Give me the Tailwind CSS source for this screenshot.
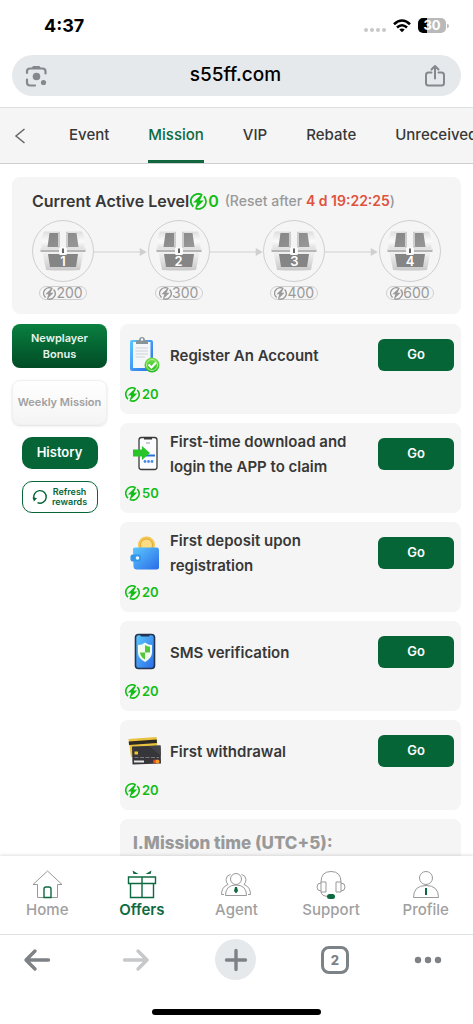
<!DOCTYPE html>
<html lang="en">
<head>
    <meta charset="UTF-8">
    <meta name="viewport" content="width=device-width, initial-scale=1.0">
    <title>Mission</title>
    <script src="https://cdn.jsdelivr.net/npm/@tailwindcss/browser@4"></script>
</head>
<body class="flex h-screen flex-col overflow-hidden bg-white font-['Inter','Liberation_Sans',sans-serif] text-[#383838]">

    <!-- shared icons -->
    <svg class="absolute size-0">
        <symbol id="coin" viewBox="0 0 16 16">
            <path d="M11 1.700A6.900 6.900 0 0 0 3.200 13M5.400 14.400A6.900 6.900 0 0 0 13 3.200" fill="none" stroke="currentColor" stroke-width="1.700"/>
            <path d="M11.200 1L3 9H6.600L4.600 15.400L13 7H9.200L12 1.400Z" fill="currentColor"/>
        </symbol>
        <symbol id="chest" viewBox="0 0 46 42">
            <path d="M4 1.500H42L44.500 8V21H1.500V8Z" fill="url(#metal)"/>
            <path d="M9.500 3H36.500L38.500 17H7.500Z" fill="url(#dark)"/>
            <path d="M2.500 22H43.500L40 40Q23 41 6 40Z" fill="url(#metal2)"/>
            <path d="M8 24H38L36 37H10Z" fill="#858585"/>
            <path d="M0.500 19.500H45.500V22H0.500Z" fill="#b5b5b5"/>
            <path d="M0.500 18.500H45.500V20H0.500Z" fill="#e4e4e4"/>
            <path d="M18 2H28V18H18Z" fill="#cdcdcd"/>
            <path d="M20 0H26V20H20Z" fill="#f4f4f4"/>
            <rect x="19" y="17" width="8" height="8" rx="1.500" fill="#fafafa"/>
            <path d="M22 18.500H24V23H22Z" fill="#666"/>
        </symbol>
        <defs>
            <linearGradient id="metal" x1="0" y1="0" x2="0" y2="1"><stop offset="0" stop-color="#dedede"/><stop offset=".5" stop-color="#fafafa"/><stop offset="1" stop-color="#d6d6d6"/></linearGradient>
            <linearGradient id="metal2" x1="0" y1="0" x2="0" y2="1"><stop offset="0" stop-color="#f2f2f2"/><stop offset="1" stop-color="#c9c9c9"/></linearGradient>
            <linearGradient id="dark" x1="0" y1="0" x2="1" y2="1"><stop offset="0" stop-color="#858585"/><stop offset="1" stop-color="#989898"/></linearGradient>
            <linearGradient id="blue" x1="0" y1="0" x2="1" y2="1"><stop offset="0" stop-color="#5cc8fd"/><stop offset="1" stop-color="#2a6be8"/></linearGradient>
            <linearGradient id="green" x1="0" y1="0" x2="0" y2="1"><stop offset="0" stop-color="#7be04e"/><stop offset="1" stop-color="#23b528"/></linearGradient>
        </defs>
    </svg>

    <!-- status bar -->
    <div class="flex h-[55px] shrink-0 items-center justify-between pr-6 pb-1 pl-11 text-black">
        <span class="text-lg leading-6 font-bold">4:37</span>
        <div class="flex items-center gap-[7px]">
            <svg class="mt-2 h-1 w-[22px]" viewBox="0 0 22 4" fill="#c8c8c8"><circle cx="2" cy="2" r="2"/><circle cx="8" cy="2" r="2"/><circle cx="14" cy="2" r="2"/><circle cx="20" cy="2" r="2"/></svg>
            <svg class="h-[14px] w-[18px]" viewBox="0 0 18 14" fill="none" stroke="#000" stroke-width="2.600">
                <path d="M1 5.200Q9 -2.200 17 5.200M4 8.500Q9 4 14 8.500"/>
                <path d="M6.300 10.600Q9 8.500 11.700 10.600L9 13.300Z" fill="#000" stroke="none"/>
            </svg>
            <div class="flex items-center gap-px">
                <span class="w-7 rounded-[5px] bg-linear-to-r from-black from-32% to-[#b9b9b9] to-32% text-center text-[13px] leading-[15px] font-bold text-white">30</span>
                <span class="h-1 w-[2px] rounded-r bg-[#b9b9b9]"></span>
            </div>
        </div>
    </div>

    <!-- address bar -->
    <div class="mx-3 flex h-[41px] shrink-0 items-center justify-between rounded-full bg-[#e6e9ec] px-3 text-[#85888c]">
        <button type="button" aria-label="Search with camera">
            <svg class="size-6" viewBox="0 0 24 24" fill="none" stroke="currentColor" stroke-width="2.200" stroke-linecap="round">
                <path d="M3 9V7.500Q3 4.500 6 4.500H18.500Q21.500 4.500 21.500 7.500V9.500M3 15.500V18.500Q3 21.500 6 21.500H11"/>
                <path d="M7.500 4.500L9 2H15.500L17 4.500Z" fill="currentColor" stroke="none"/>
                <circle cx="12.500" cy="12.500" r="3.800" fill="currentColor" stroke="none"/>
                <circle cx="19.500" cy="18.500" r="2.600" fill="currentColor" stroke="none"/>
            </svg>
        </button>
        <span class="text-[19px] font-medium text-black">s55ff.com</span>
        <button type="button" aria-label="Share" class="pr-[2px]">
            <svg class="size-6" viewBox="0 0 24 24" fill="none" stroke="currentColor" stroke-width="2" stroke-linecap="round" stroke-linejoin="round">
                <path d="M8.500 8.500H5.500Q3 8.500 3 11V19Q3 21.500 5.500 21.500H18.500Q21 21.500 21 19V11Q21 8.500 18.500 8.500H15.500M12 14.500V2.500M8.500 5.500L12 2L15.500 5.500"/>
            </svg>
        </button>
    </div>

    <!-- tabs -->
    <nav class="mt-[11px] flex h-[57px] shrink-0 items-stretch overflow-hidden border-t border-b border-t-[#dcdfe2] border-b-[#cfcfcf] bg-[#f5f5f5] text-[15px] font-medium">
        <button type="button" aria-label="Back" class="w-[69px] shrink-0 pl-[14px]">
            <svg class="h-4 w-3" viewBox="0 0 12 16" fill="none" stroke="#666" stroke-width="1.500"><path d="M10.500 1L2 8L10.500 15"/></svg>
        </button>
        <div class="flex shrink-0 gap-[39px]">
            <a href="#" class="flex items-center">Event</a>
            <a href="#" class="flex items-center border-y-[3px] border-t-transparent border-b-[#11653f] text-[#0c6a40]">Mission</a>
            <a href="#" class="flex items-center">VIP</a>
            <a href="#" class="flex items-center">Rebate</a>
            <a href="#" class="flex items-center">Unreceived</a>
        </div>
    </nav>

    <main class="flex-1 overflow-hidden px-3 pt-[13px]">
        <!-- active level -->
        <section class="rounded-lg bg-[#f5f5f5] px-5 pt-3 pb-[14px]">
            <div class="flex items-center whitespace-nowrap">
                <h2 class="text-base font-semibold">Current Active Level</h2>
                <svg class="ml-px size-[17px] text-[#12bd15]"><use href="#coin"/></svg>
                <span class="ml-px text-base font-semibold text-[#12bd15]">0</span>
                <span class="ml-[6px] text-sm font-medium text-[#999]">(Reset after <b class="font-semibold text-[#e0523c]">4 d 19:22:25</b>)</span>
            </div>
            <div class="mt-[7px] flex items-start">
                <div class="relative flex w-[62px] shrink-0 flex-col items-center">
                    <div class="flex size-[62px] items-center justify-center rounded-full border border-[#cfcfcf]"><svg class="h-[42px] w-[46px]"><use href="#chest"/></svg></div>
                    <span class="absolute top-8 text-[13px] leading-[18px] font-semibold text-white">1</span>
                    <div class="mt-1 flex h-[14px] w-12 items-center justify-center rounded-full border border-[#cfcfcf] text-sm text-[#999]"><svg class="size-[13px]"><use href="#coin"/></svg>200</div>
                </div>
                <svg class="mt-7 h-2 min-w-0 flex-1" viewBox="0 0 54 8"><path d="M0 4H48" stroke="#cfcfcf"/><path d="M46 0L53 4L46 8Z" fill="#cfcfcf"/></svg>
                <div class="relative flex w-[62px] shrink-0 flex-col items-center">
                    <div class="flex size-[62px] items-center justify-center rounded-full border border-[#cfcfcf]"><svg class="h-[42px] w-[46px]"><use href="#chest"/></svg></div>
                    <span class="absolute top-8 text-[13px] leading-[18px] font-semibold text-white">2</span>
                    <div class="mt-1 flex h-[14px] w-12 items-center justify-center rounded-full border border-[#cfcfcf] text-sm text-[#999]"><svg class="size-[13px]"><use href="#coin"/></svg>300</div>
                </div>
                <svg class="mt-7 h-2 min-w-0 flex-1" viewBox="0 0 54 8"><path d="M0 4H48" stroke="#cfcfcf"/><path d="M46 0L53 4L46 8Z" fill="#cfcfcf"/></svg>
                <div class="relative flex w-[62px] shrink-0 flex-col items-center">
                    <div class="flex size-[62px] items-center justify-center rounded-full border border-[#cfcfcf]"><svg class="h-[42px] w-[46px]"><use href="#chest"/></svg></div>
                    <span class="absolute top-8 text-[13px] leading-[18px] font-semibold text-white">3</span>
                    <div class="mt-1 flex h-[14px] w-12 items-center justify-center rounded-full border border-[#cfcfcf] text-sm text-[#999]"><svg class="size-[13px]"><use href="#coin"/></svg>400</div>
                </div>
                <svg class="mt-7 h-2 min-w-0 flex-1" viewBox="0 0 54 8"><path d="M0 4H48" stroke="#cfcfcf"/><path d="M46 0L53 4L46 8Z" fill="#cfcfcf"/></svg>
                <div class="relative flex w-[62px] shrink-0 flex-col items-center">
                    <div class="flex size-[62px] items-center justify-center rounded-full border border-[#cfcfcf]"><svg class="h-[42px] w-[46px]"><use href="#chest"/></svg></div>
                    <span class="absolute top-8 text-[13px] leading-[18px] font-semibold text-white">4</span>
                    <div class="mt-1 flex h-[14px] w-12 items-center justify-center rounded-full border border-[#cfcfcf] text-sm text-[#999]"><svg class="size-[13px]"><use href="#coin"/></svg>600</div>
                </div>
            </div>
        </section>

        <div class="mt-[10px] flex gap-[13px]">
            <!-- mission groups -->
            <aside class="flex w-[95px] shrink-0 flex-col items-center gap-3 font-semibold">
                <button type="button" class="h-11 w-full rounded-lg bg-linear-to-b from-[#0a8040] to-[#024c26] px-4 text-[11px] leading-4 text-[#e6f3eb]">Newplayer Bonus</button>
                <button type="button" class="h-[45px] w-full rounded-lg border border-[#f0f0f0] bg-linear-to-b from-white to-[#f4f4f4] text-[11px] whitespace-nowrap text-[#a0a0a0] shadow">Weekly Mission</button>
                <button type="button" class="h-8 w-[76px] rounded-[10px] bg-[#056536] text-[13px] text-white">History</button>
                <button type="button" class="flex h-8 w-[76px] items-center justify-center gap-1 rounded-[10px] border border-[#056536] text-[9px] leading-[10px] text-[#056536]">
                    <svg class="size-4" viewBox="0 0 16 16" fill="none" stroke="currentColor" stroke-width="1.400"><path d="M2 10A6.300 6.300 0 1 1 5.500 13.700"/><path d="M0.500 8.500L5 9L2 12.500Z" fill="currentColor" stroke="none"/></svg>
                    <span>Refresh<br>rewards</span>
                </button>
            </aside>

            <!-- missions -->
            <div class="flex min-w-0 flex-1 flex-col gap-[9px]">
                <article class="h-[90px] rounded-lg bg-[#f5f5f5] pt-[6px] pr-[7px] pl-[5px]">
                    <div class="flex h-[50px] items-center">
                        <svg class="size-10 shrink-0" viewBox="0 0 40 40">
                            <rect x="5" y="5" width="23" height="31" rx="2" fill="url(#blue)"/>
                            <path d="M8 7H25.500V31L23 33H8Z" fill="#f4f6f8"/>
                            <path d="M10.500 13H23M10.500 16H23M10.500 19H23M10.500 22H20" stroke="#d0d3d8"/>
                            <path d="M11 5.500H14Q14 2 17 2T20 5.500H23V9H11Z" fill="#87949a"/><circle cx="17" cy="4.500" r="1.200" fill="#fff"/>
                            <circle cx="27" cy="30" r="7.500" fill="url(#green)"/><circle cx="27" cy="30" r="5.500" fill="none" stroke="#b3f08e"/>
                            <path d="M23.500 29.500L26.500 32.500L31 27.500" fill="none" stroke="#fff" stroke-width="2"/>
                        </svg>
                        <h3 class="ml-[5px] flex-1 text-[15px] leading-[25px] font-semibold">Register An Account</h3>
                        <button type="button" class="h-8 w-[76px] shrink-0 rounded-md bg-[#056536] text-[13px] font-semibold text-white">Go</button>
                    </div>
                    <p class="mt-[5px] flex items-center gap-[2px] text-[13px] font-semibold text-[#12bd15]"><svg class="size-[15px]"><use href="#coin"/></svg>20</p>
                </article>

                <article class="h-[90px] rounded-lg bg-[#f5f5f5] pt-[6px] pr-[7px] pl-[5px]">
                    <div class="flex h-[50px] items-center">
                        <svg class="size-10 shrink-0" viewBox="0 0 40 40">
                            <rect x="14" y="3.500" width="18" height="32" rx="2.500" fill="#fafcff" stroke="#3b3b3b" stroke-width="1.300"/>
                            <path d="M19 3.500H27V5.500H19Z" fill="#3b3b3b"/><path d="M21 9H25" stroke="#999"/>
                            <path d="M21 21.500H30" stroke="#2c70d8" stroke-width="2"/>
                            <circle cx="20" cy="27.500" r="1.400" fill="#4689e8"/><circle cx="23.500" cy="27.500" r="1.400" fill="#4689e8"/><circle cx="27" cy="27.500" r="1.400" fill="#4689e8"/>
                            <path d="M8 15.500H17V12L25 19L17 26V22.500H8Z" fill="#27c42a"/>
                        </svg>
                        <h3 class="ml-[5px] flex-1 text-[15px] leading-[25px] font-semibold">First-time download and login the APP to claim</h3>
                        <button type="button" class="h-8 w-[76px] shrink-0 rounded-md bg-[#056536] text-[13px] font-semibold text-white">Go</button>
                    </div>
                    <p class="mt-[5px] flex items-center gap-[2px] text-[13px] font-semibold text-[#12bd15]"><svg class="size-[15px]"><use href="#coin"/></svg>50</p>
                </article>

                <article class="h-[90px] rounded-lg bg-[#f5f5f5] pt-[6px] pr-[7px] pl-[5px]">
                    <div class="flex h-[50px] items-center">
                        <svg class="size-10 shrink-0" viewBox="0 0 40 40">
                            <circle cx="21.500" cy="12" r="8.500" fill="#f4c64f"/><circle cx="21.500" cy="12" r="6" fill="#fadc83" stroke="#e0a83a"/>
                            <path d="M8 16Q8 14.500 10 14.500H32Q34 14.500 34 17V34Q34 36.500 31.500 36.500H11.500Q9 36.500 8.500 34Z" fill="url(#blue)"/>
                            <rect x="5.500" y="21.500" width="10.500" height="7" rx="2" fill="#3296eb"/><circle cx="12.500" cy="25" r="1.800" fill="#e8f8ff"/>
                        </svg>
                        <h3 class="ml-[5px] flex-1 text-[15px] leading-[25px] font-semibold">First deposit upon registration</h3>
                        <button type="button" class="h-8 w-[76px] shrink-0 rounded-md bg-[#056536] text-[13px] font-semibold text-white">Go</button>
                    </div>
                    <p class="mt-[5px] flex items-center gap-[2px] text-[13px] font-semibold text-[#12bd15]"><svg class="size-[15px]"><use href="#coin"/></svg>20</p>
                </article>

                <article class="h-[90px] rounded-lg bg-[#f5f5f5] pt-[6px] pr-[7px] pl-[5px]">
                    <div class="flex h-[50px] items-center">
                        <svg class="size-10 shrink-0" viewBox="0 0 40 40">
                            <rect x="10.500" y="2.500" width="19" height="34" rx="3" fill="url(#blue)" stroke="#22344f" stroke-width="1.600"/>
                            <path d="M15 2.500H25L24 4.500H16Z" fill="#22344f"/>
                            <path d="M20 10.500Q23 13 27 13V21Q26.500 26.500 20 30Q13.500 26.500 13 21V13Q17 13 20 10.500Z" fill="#f2fbf0"/>
                            <path d="M20 13Q22 14.500 25 14.800V20.500H20ZM20 20.500V27.500Q15.500 25 15 20.500Z" fill="#55c63a"/>
                        </svg>
                        <h3 class="ml-[5px] flex-1 text-[15px] leading-[25px] font-semibold">SMS verification</h3>
                        <button type="button" class="h-8 w-[76px] shrink-0 rounded-md bg-[#056536] text-[13px] font-semibold text-white">Go</button>
                    </div>
                    <p class="mt-[5px] flex items-center gap-[2px] text-[13px] font-semibold text-[#12bd15]"><svg class="size-[15px]"><use href="#coin"/></svg>20</p>
                </article>

                <article class="h-[90px] rounded-lg bg-[#f5f5f5] pt-[6px] pr-[7px] pl-[5px]">
                    <div class="flex h-[50px] items-center">
                        <svg class="size-10 shrink-0" viewBox="0 0 40 40">
                            <path d="M3.500 8L31.500 6L33 22L6 26Z" fill="#e8c13e"/><path d="M3.700 10.500L31.800 8.500L32 12L4 14Z" fill="#2d2a22"/>
                            <path d="M7 15.500L35.500 14.500L36 32.500L7.500 33.500Z" fill="#35353a"/><path d="M24 15L35.500 14.500L36 25Z" fill="#434348"/>
                            <rect x="9.500" y="20.500" width="3.500" height="3" fill="#f0c62e"/>
                            <path d="M9.500 26.500H34" stroke="#77777c" stroke-dasharray="4 1.500"/><path d="M9 30.500H19" stroke="#e8e8e8" stroke-width="2"/>
                            <circle cx="30" cy="30.500" r="2" fill="#e84526"/><circle cx="32.500" cy="30.500" r="2" fill="#f59a23"/>
                        </svg>
                        <h3 class="ml-[5px] flex-1 text-[15px] leading-[25px] font-semibold">First withdrawal</h3>
                        <button type="button" class="h-8 w-[76px] shrink-0 rounded-md bg-[#056536] text-[13px] font-semibold text-white">Go</button>
                    </div>
                    <p class="mt-[5px] flex items-center gap-[2px] text-[13px] font-semibold text-[#12bd15]"><svg class="size-[15px]"><use href="#coin"/></svg>20</p>
                </article>

                <article class="h-[90px] rounded-lg bg-[#f5f5f5] px-[13px] pt-3">
                    <h3 class="text-[17px] font-extrabold text-[#999]">I.Mission time (UTC+5):</h3>
                </article>
            </div>
        </div>
    </main>

    <!-- site navigation -->
    <nav class="z-10 grid h-[78px] shrink-0 grid-cols-5 bg-white pt-3 text-[15px] leading-5 font-medium text-[#a0a0a0] shadow-[0_-1px_3px_rgba(0,0,0,0.12)]">
        <a href="#" class="flex flex-col items-center">
            <svg class="size-8" viewBox="0 0 32 32" fill="none" stroke="#999"><path d="M6.500 16.500V29.500H26.500V16.500M6.500 16.500H2L16.500 3L31 16.500H26.500"/><path d="M13 29.500V21Q13 19 15 19H18Q20 19 20 21V29.500Z" stroke="#0c6a40" stroke-width="1.400"/></svg>
            Home
        </a>
        <a href="#" class="flex flex-col items-center font-semibold text-[#0c6a40]">
            <svg class="size-8" viewBox="0 0 32 32" fill="none" stroke="currentColor" stroke-width="1.400"><path d="M2.500 9H29.500V15.500H2.500ZM4.500 15.500V29.500H27.500V15.500M16 9V29.500"/><path d="M6.500 2.500L12.500 6H7.500ZM25.500 2.500L19.500 6H24.500Z" fill="currentColor" stroke="none"/></svg>
            Offers
        </a>
        <a href="#" class="flex flex-col items-center">
            <svg class="size-8" viewBox="0 0 32 32" fill="none" stroke="#999"><circle cx="16" cy="11" r="5.500"/><path d="M5.500 27.500Q5.500 17 16 17T26.500 27.500Z"/><path d="M10.500 6.500Q6.500 7 6 11.500Q6 14.500 8 16.500Q1.500 19 1.500 26.500H4M21.500 6.500Q25.500 7 26 11.500Q26 14.500 24 16.500Q30.500 19 30.500 26.500H28"/><path d="M15 19H17L18 23L16 25.500L14 23Z" fill="#0c6a40" stroke="none"/></svg>
            Agent
        </a>
        <a href="#" class="flex flex-col items-center">
            <svg class="size-8" viewBox="0 0 32 32" fill="none" stroke="#999"><path d="M6 14Q6 3.500 16 3.500T26 14M6 14H11V24H6ZM21 14H26V24H21ZM6 15Q2 15 2 19T6 23M26 15Q30 15 30 19T26 23M6 24Q6.500 28 13 28.500"/><rect x="12" y="26" width="8" height="5" rx="2.500" fill="#0c6a40" stroke="none"/></svg>
            Support
        </a>
        <a href="#" class="flex flex-col items-center">
            <svg class="size-8" viewBox="0 0 32 32" fill="none" stroke="#999"><circle cx="16" cy="10" r="6.500"/><path d="M3.500 29.500Q3.500 17.500 16 17.500T28.500 29.500Z"/><path d="M16 20V27" stroke="#0c6a40" stroke-width="2"/></svg>
            Profile
        </a>
    </nav>

    <!-- browser toolbar -->
    <footer class="z-10 flex shrink-0 flex-col items-center border-t border-[#dfe1e4] bg-white pt-1 pb-[9px] text-[#7d8286]">
        <div class="flex w-full items-center justify-between pr-[31px] pl-4">
            <button type="button" aria-label="Back" class="flex w-[41px] justify-center"><svg class="size-7" viewBox="0 0 28 28" fill="none" stroke="currentColor" stroke-width="3.400" stroke-linecap="round" stroke-linejoin="round"><path d="M25.500 14H3M12 5L3 14L12 23"/></svg></button>
            <button type="button" aria-label="Forward" disabled class="flex w-[41px] justify-center"><svg class="size-7" viewBox="0 0 28 28" fill="none" stroke="#c6c8ca" stroke-width="3.400" stroke-linecap="round" stroke-linejoin="round"><path d="M2.500 14H25M16 5L25 14L16 23"/></svg></button>
            <button type="button" aria-label="New tab" class="flex size-[41px] items-center justify-center rounded-full bg-[#e6e9ec]"><svg class="size-6" viewBox="0 0 24 24" fill="none" stroke="currentColor" stroke-width="3.400" stroke-linecap="round"><path d="M12 2.500V21.500M2.500 12H21.500"/></svg></button>
            <button type="button" class="flex w-[41px] justify-center"><span class="size-7 rounded-lg border-[3px] border-current text-center text-[13px] leading-[22px] font-extrabold">2</span></button>
            <button type="button" aria-label="More"><svg class="h-2 w-7" viewBox="0 0 28 8" fill="currentColor"><circle cx="4" cy="4" r="3.200"/><circle cx="14" cy="4" r="3.200"/><circle cx="24" cy="4" r="3.200"/></svg></button>
        </div>
        <div class="mt-[29px] h-[6px] w-[169px] rounded-full bg-black"></div>
    </footer>
</body>
</html>
